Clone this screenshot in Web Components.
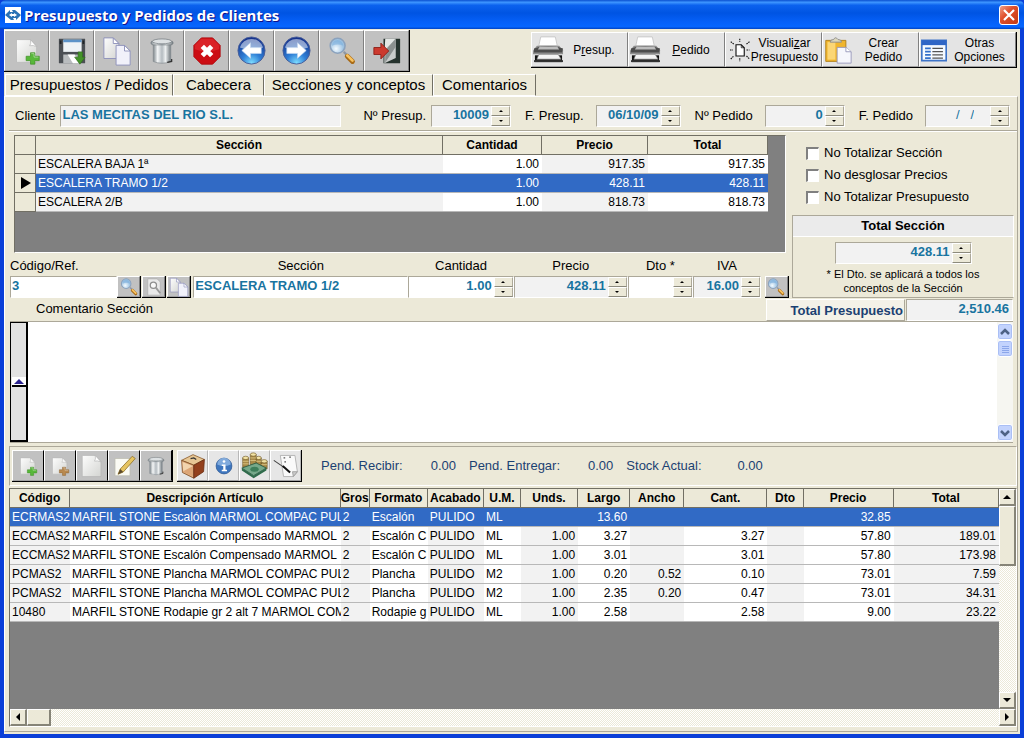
<!DOCTYPE html>
<html lang="es">
<head>
<meta charset="utf-8">
<title>Presupuesto y Pedidos de Clientes</title>
<style>
html, body { height: 100%; }
body {
  margin: 0;
  font: 13px/16px "Liberation Sans", Arial, sans-serif;
  color: #000;
  background: #ece9d8;
}
</style>
</head>
<body>
<order-app></order-app>

<script>
const doc = `<path d="M4 3h16l7 7v19H4z" fill="url(#pg)" stroke="#b4b4b4" stroke-width=".8"/><path d="M20 3q1 5-1 7 4-1 8 1z" fill="#fff" stroke="#b4b4b4" stroke-width=".8"/>`;
const pageGrad = `<linearGradient id="pg" x1="0" y1="0" x2="1" y2="1"><stop offset="0" stop-color="#fdfdfd"/><stop offset="1" stop-color="#d4d5d2"/></linearGradient>`;
const plus = (fill, edge) => `<path d="M20 18h5v4h5v5h-5v4h-5v-4h-5v-5h5z" fill="${fill}" stroke="${edge}" stroke-width=".8"/><path d="M21 19h3v4h5" fill="none" stroke="#fff" stroke-opacity=".45"/>`;
const orb = `<defs><radialGradient id="ob" cx=".5" cy=".95" r=".9"><stop offset="0" stop-color="#7ddcff"/><stop offset=".4" stop-color="#2f7fd6"/><stop offset="1" stop-color="#16338c"/></radialGradient></defs><circle cx="16" cy="16" r="14" fill="url(#ob)" stroke="#4a5f9a"/><path d="M4 13a12.500 12.500 0 0 1 24 0q-12 5-24 0z" fill="#fff" fill-opacity=".5"/>`;
const can = `<defs><linearGradient id="cn"><stop offset="0" stop-color="#7d868b"/><stop offset=".25" stop-color="#f4f6f7"/><stop offset=".5" stop-color="#b4bbc0"/><stop offset=".7" stop-color="#eceff0"/><stop offset="1" stop-color="#6f777c"/></linearGradient></defs><path d="M6 6v22q10 4 20 0V6z" fill="url(#cn)" stroke="#858d92" stroke-width=".8"/><path d="M22 29l5-1v-3" fill="none" stroke="#333" stroke-width="1.500"/><path d="M4 5q-2 2 1 4h22q3-2 1-4z" fill="url(#cn)" stroke="#727a7f" stroke-width=".8"/><ellipse cx="16" cy="5" rx="11" ry="2.800" fill="#dde1e3" stroke="#727a7f" stroke-width=".8"/>`;
const lens = `<defs><radialGradient id="ln" cx=".4" cy=".7"><stop offset="0" stop-color="#f4fbff"/><stop offset="1" stop-color="#9cc2e2"/></radialGradient></defs><path d="M18 17l4 4" stroke="#8d97a3" stroke-width="2.500"/><path d="M22 22l6 6" stroke="#a86a16" stroke-width="5.500" stroke-linecap="round"/><path d="M22 21l6 6" stroke="#f8c35f" stroke-width="3" stroke-linecap="round"/><circle cx="11" cy="10" r="8.500" fill="url(#ln)" stroke="#8ba2bd" stroke-width="1.800"/><path d="M4.500 10a6.500 6.500 0 0 1 13 0q-6-3-13 0z" fill="#7fb0dd" fill-opacity=".6"/>`;

const icons = {
  add: `<defs>${pageGrad}</defs>${doc}${plus("#58b83a", "#3f8f27")}`,
  addOrange: `<defs>${pageGrad}</defs>${doc}${plus("#b9894e", "#8d6534")}`,
  page: `<defs>${pageGrad}</defs>${doc}`,
  save: `<path d="M1 2h30v28H1z" fill="#4b4f54"/><path d="M6 3h21v14H6z" fill="#eef3f6"/><path d="M6 3h21v3H6z" fill="#5c93c8"/><path d="M2 4h2v4H2zM28 4h2v4h-2z" fill="#202427"/><path d="M6 20h19v10H6z" fill="#b9bcbe"/><path d="M11 20h8l5 10h-7z" fill="#fff"/><path d="M23 17h5v6h3l-6 8-6-8h4z" fill="#439328" stroke="#2f6b1c" stroke-width=".7"/>`,
  copy: `<defs>${pageGrad}</defs><path d="M2 2h10l6 6v16H2z" fill="url(#pg)" stroke="#8e91bb"/><path d="M12 2v6h6z" fill="#fff" stroke="#8e91bb"/><path d="M15 10h9l6 6v15H15z" fill="#f1f1fa" stroke="#8e91bb"/><path d="M24 10v6h6z" fill="#fff" stroke="#8e91bb"/>`,
  trash: can,
  cancel: `<path d="M10 2h12l8 8v12l-8 8H10l-8-8V10z" fill="#cc0d13" stroke="#b00c10"/><path d="M10 3h12l7 7v4q-13 5-26 0v-4z" fill="#e8383b" fill-opacity=".5"/><path d="M11 11l10 10M21 11L11 21" stroke="#fff" stroke-width="5"/>`,
  back: `${orb}<path d="M6 16l9-8v5h11v6H15v5z" fill="#fff" stroke="#c2d5ee" stroke-width=".7"/>`,
  next: `${orb}<path d="M26 16l-9-8v5H6v6h11v5z" fill="#fff" stroke="#c2d5ee" stroke-width=".7"/>`,
  search: lens,
  searchDoc: `<path d="M6 3h15l5 5v21H6z" fill="#e9e9e9" stroke="#aaa"/><circle cx="15" cy="13" r="5" fill="#f8f8f8" stroke="#8e8e8e" stroke-width="2"/><path d="M19 17l7 9" stroke="#999" stroke-width="3"/>`,
  exit: `<path d="M12 2h19v28H12z" fill="#26332e"/><path d="M14 2h12L16 13v10l-3-5z" fill="#e3e6e4"/><path d="M26 2v22L13 30V15z" fill="#c9cccb"/><path d="M26 2v9L14 29V15z" fill="#8b908f"/><path d="M1 12h8V7l9 9-9 9v-5H1z" fill="#cc3a2e" stroke="#8d1d15"/>`,
  printer: `<path d="M8 3h15l2 9H6z" fill="#fff" stroke="#bbb" stroke-width=".7"/><path d="M4 12h23l4 5v4H0v-4z" fill="#8e8e8e"/><path d="M1 15q15-5 30 0l-1 4H1z" fill="#4c4c4c"/><path d="M7 13h18l2 3H5z" fill="#bdbdbd"/><path d="M2 22h28v7H2z" fill="#111"/><path d="M6 21h20l3 5H4z" fill="#f4f4f4" stroke="#777" stroke-width=".7"/><path d="M1 27h30v2H1z" fill="#333"/>`,
  preview: `<path d="M12 9h7l4 4v11H12z" fill="#fff" stroke="#111" stroke-width="1.500"/><path d="M19 9v4h4" fill="none" stroke="#111"/><path d="M4 16h4M26 16h4M17 1v4M17 27v4M5 5l4 3M26 8l4-3M5 28l4-4M26 24l4 4" stroke="#111" stroke-width="1.500" stroke-dasharray="2 1"/>`,
  paste: `<path d="M2 5h23v24H2z" fill="#f0b52d" stroke="#ad7b12"/><path d="M4 7h9v20H4z" fill="#fbd675"/><path d="M7 7q0-3 4-3 2-4 5 0 4 0 4 3z" fill="#ddd8bc" stroke="#888"/><path d="M15 13h10l6 5v13H15z" fill="#f6f7fc" stroke="#9395b8"/><path d="M25 13v5h6" fill="#fff" stroke="#9395b8"/>`,
  list: `<path d="M1 4h30v25H1z" fill="#f5faff" stroke="#3e74c8" stroke-width="2"/><path d="M1 4h30v6H1z" fill="#2f66c6"/><path d="M5 14h7M5 18h7M5 22h7M5 26h7" stroke="#326fca" stroke-width="2"/><path d="M14 14h13M14 18h13M14 22h13M14 26h13" stroke="#555" stroke-width="1.500"/>`,
  edit: `<path d="M4 6h20v23H4z" fill="#fbfbf4" stroke="#bcbcb0"/><path d="M8 27l3-7L27 3l4 3-16 18z" fill="#e6c460" stroke="#8a6b21"/><path d="M8 27l3-7 4 4z" fill="#5b4a2c"/>`,
  box: `<path d="M2 9l14-7 14 6-13 7z" fill="#e7c795" stroke="#8a5a2a"/><path d="M2 9l15 6v16L3 24z" fill="#d9a574" stroke="#80502a"/><path d="M17 15l13-7-1 15-12 8z" fill="#93401d" stroke="#6a2d14"/><path d="M3 11l13 5v13L4 23z" fill="#f2d4ae"/><path d="M3 23l13-7v13z" fill="#dca576"/><path d="M13 7l4-1 3 2" fill="none" stroke="#333" stroke-width="1.500"/>`,
  info: `<circle cx="16" cy="16" r="10.500" fill="#3e76be" stroke="#2a5593"/><path d="M7 14a9 9 0 0 1 18 0q-9 4-18 0z" fill="#9bc0ea" fill-opacity=".7"/><circle cx="16" cy="10" r="1.800" fill="#fff"/><path d="M13 14h5v7h2v2h-7v-2h2v-5h-2z" fill="#fff"/>`,
  money: `<g stroke="#6a5220" stroke-width=".7"><path d="M11 3v13h7V3zM2 7v11h7V7zM18 7v9h6V7zM24 11v9h7v-9z" fill="#a98a48"/><ellipse cx="5.500" cy="7" rx="3.500" ry="2" fill="#f2e2a4"/><ellipse cx="14.500" cy="3" rx="3.500" ry="2" fill="#f2e2a4"/><ellipse cx="21" cy="7" rx="3" ry="2" fill="#f2e2a4"/><ellipse cx="27.500" cy="11" rx="3.500" ry="2" fill="#f2e2a4"/></g><path d="M2 11h7M2 14h7M11 7h7M11 10h7M18 11h6M24 15h7" stroke="#dcc685"/><path d="M1 19l17-6 12 6-15 9z" fill="#76a98a" stroke="#275740"/><path d="M1 19l14 9v3L1 22zM15 28l15-9v3l-15 9z" fill="#2f6b4b"/><ellipse cx="16" cy="20.500" rx="5" ry="3" fill="#3d7e5a"/>`,
  note: `<path d="M9 3h18l3 20-5 6H13z" fill="#fafafa" stroke="#aaa"/><path d="M25 29l-1-6h6z" fill="#ccc" stroke="#999"/><path d="M1 9l13 9" stroke="#444" stroke-width="1.300"/><path d="M12 16l9 8" stroke="#111" stroke-width="2.500"/><path d="M13 6h2M14 11h2M20 5h2" stroke="#555" stroke-width="1.500"/>`,
};

const svg = (name, size) =>
  `<svg width="${size}" height="${size}" viewBox="0 0 32 32" aria-hidden="true">${icons[name]}</svg>`;

function define(name, html, setup) {
  const template = document.createElement("template");
  template.innerHTML = html;
  customElements.define(
    name,
    class extends HTMLElement {
      constructor() {
        super();
        this.attachShadow({ mode: "open" });
        this.shadowRoot.appendChild(template.content.cloneNode(true));
      }
      connectedCallback() {
        if (setup && !this.ready) setup(this, this.shadowRoot);
        this.ready = true;
      }
    }
  );
}

define("title-bar", `
<style>
:host {
  display: flex; align-items: center; gap: 3px; height: 29px; padding: 0 5px;
  box-sizing: border-box; border-radius: 6px 6px 0 0; color: #fff;
  background: linear-gradient(#0a50d0, #3d95ff 8%, #0b62ee 18%, #0054e3 45%, #0560f8 75%, #0666ff 92%, #0043c4);
}
h1 { flex: 1; margin: 0; font: bold 15px/20px "Trebuchet MS", "Open Sans", sans-serif; text-shadow: 1px 1px #0f1089; }
button { width: 20px; height: 20px; padding: 0; border: 1px solid #fff; border-radius: 3px; background: linear-gradient(135deg, #f0a088, #e0502c 40%, #c33a12); }
svg { display: block; }
</style>
<svg width="16" height="16" viewBox="0 0 16 16" aria-hidden="true"><path d="M0 0h16v16H0z" fill="#fff"/><path d="M0 8l5-5v2h3L7 3h3l6 5-5 5v-2H8l1 2H6z" fill="#2a72b5"/><path d="M4 8l3-2v1h2V6l3 2-3 2V9H7v1z" fill="#fff"/></svg>
<h1><slot></slot></h1>
<button type="button" aria-label="Cerrar"><svg width="18" height="18" viewBox="0 0 18 18"><path d="M4 4l10 10M14 4L4 14" stroke="#fff" stroke-width="2.200"/></svg></button>
`);

define("button-group", `
<style>
:host { display: flex; border: solid #000; border-width: 0 1px 1px 0; }
</style>
<slot></slot>
`);

define("tool-button", `
<style>
:host { display: block; width: var(--tool-width, 45px); height: var(--tool-height, 41px); }
button {
  display: flex; align-items: center; justify-content: center; width: 100%; height: 100%;
  padding: 0 1px; box-sizing: border-box; font: 12px/14px "Liberation Sans", Arial, sans-serif; color: #000;
  border: solid; border-width: 1px; border-color: #fff var(--tool-edge, #808080) #a0a0a0 #fff;
  background: var(--tool-face, #c1c1c1);
}
svg { flex: none; }
:host([wide]) svg { margin: 0 -2px 0 0; }
:host([wide]) span { flex: 1; text-align: center; }
:host([wide]) { --tool-face: #e4e4e4; }
:host(:not([wide])) span { display: none; }
</style>
<button type="button"><span><slot></slot></span></button>
`, (el, root) => {
  const button = root.querySelector("button");
  button.insertAdjacentHTML("afterbegin", svg(el.getAttribute("icon"), el.getAttribute("size") || 28));
  if (el.hasAttribute("name")) button.setAttribute("aria-label", el.getAttribute("name"));
});

define("tab-strip", `
<style>
:host { display: flex; height: 22px; padding-left: 1px; }
button {
  height: 22px; padding: 0; font: 15px/20px "Liberation Sans", Arial, sans-serif; color: #000; background: #ece9d8;
  border: solid; border-width: 1px; border-color: #fff #716f64 #fff #fff;
}
button[aria-selected=true] { border-bottom-color: #ece9d8; }
</style>
`, (el, root) => {
  const tabs = [["Presupuestos / Pedidos", 168], ["Cabecera", 91], ["Secciones y conceptos", 169], ["Comentarios", 103]];
  root.append(...tabs.map(([text, width], i) => {
    const tab = document.createElement("button");
    tab.setAttribute("role", "tab");
    tab.setAttribute("aria-selected", i === 2);
    tab.style.width = width + "px";
    tab.textContent = text;
    return tab;
  }));
  el.setAttribute("role", "tablist");
});

// label + text box, with up/down buttons when "spin" is set
define("form-field", `
<style>
:host { display: flex; align-items: center; gap: var(--label-gap, 12px); }
:host([stacked]) { flex-direction: column; align-items: stretch; gap: 3px; min-width: 0; }
:host([stacked]) label { line-height: 15px; text-align: center; }
:host([stacked][start]) label { text-align: left; }
label { white-space: nowrap; }
.box {
  display: flex; flex: 1; height: 22px; box-sizing: border-box; min-width: 0;
  border: solid; border-width: 1px; border-color: #aca899 #fff #fff #aca899; background: #f2f2f2;
}
:host([stacked]) .box { flex: none; }
:host([editable]) .box { background: #fff; }
:host(:not([stacked])[spin]) .box { flex: 0 0 var(--box-width, 80px); }
input {
  flex: 1; width: 0; min-width: 0; padding: 0 1px 2px; border: 0; outline: 0; background: none;
  font: bold 13px/16px "Liberation Sans", Arial, sans-serif; color: #1874a0;
}
:host([spin]) input { text-align: right; padding-right: 2px; }
:host([mask]) input { padding-right: 16px; font-weight: normal; }
.spin { display: none; flex-direction: column; width: 19px; }
:host([spin]) .spin { display: flex; }
.spin button {
  flex: 1; padding: 0; display: grid; place-items: center; background: #ece9d8;
  border: solid; border-width: 1px; border-color: #fff #aca899 #8c8a7c #fff;
}
svg { display: block; }
</style>
<label for="f"></label>
<div class="box">
  <input id="f" type="text">
  <div class="spin">
    <button type="button" aria-label="Subir"><svg width="4" height="2"><path d="M0 2l2-2 2 2z"/></svg></button>
    <button type="button" aria-label="Bajar"><svg width="4" height="2"><path d="M0 0h4L2 2z"/></svg></button>
  </div>
</div>
`, (el, root) => {
  root.querySelector("label").textContent = el.getAttribute("label") || "";
  if (!el.hasAttribute("label")) {
    root.querySelector("label").remove();
    root.querySelector("input").setAttribute("aria-label", el.getAttribute("name"));
  }
  root.querySelector("input").value = el.getAttribute("value") || "";
});

define("check-option", `
<style>
:host { display: block; }
label { display: flex; align-items: center; gap: 5px; height: 22px; }
input {
  appearance: none; width: 13px; height: 13px; margin: 0; background: #fff;
  border: solid; border-width: 2px 1px 1px 2px; border-color: #808080 #fff #fff #808080;
}
</style>
<label><input type="checkbox"><span><slot></slot></span></label>
`);

define("scroll-bar", `
<style>
:host {
  display: flex; flex-direction: column;
  background: repeating-conic-gradient(#fff 0 25%, #ece9d8 0 50%) 0 0 / 2px 2px;
}
:host([horizontal]) { flex-direction: row; }
button, i {
  flex: 0 0 17px; width: 17px; height: 17px; padding: 0; box-sizing: border-box; display: grid; place-items: center; background: #ece9d8;
  border: solid; border-width: 1px 2px 2px 1px; border-color: #fff #868477 #868477 #fff;
}
i { flex-basis: var(--thumb, 24px); }
:host(:not([horizontal])) i { height: auto; }
b { flex: 1; }
svg { display: block; }
:host([blue]) { background: #f6f6f1; padding: 1px 0; }
:host([blue]) button, :host([blue]) i { border: 1px solid #fff; border-radius: 3px; background: #c3d3fd; box-shadow: inset 0 0 0 1px #aabff5; width: 16px; }
:host([blue]) i { background: repeating-linear-gradient(#c3d3fd 0 1px, #8ba6ea 1px 2px) 50% 50% / 7px 8px no-repeat #c3d3fd; }
</style>
<button type="button" aria-label="Atrás"></button><i></i><b></b><button type="button" aria-label="Adelante"></button>
`, (el, root) => {
  const [first, last] = root.querySelectorAll("button");
  const paths = el.hasAttribute("blue")
    ? ["M1 7l4-4 4 4", "M1 3l4 4 4-4"]
    : el.hasAttribute("horizontal") ? ["M7 1L3 5l4 4z", "M3 1l4 4-4 4z"] : ["M1 7l4-4 4 4z", "M1 3h8L5 7z"];
  const paint = el.hasAttribute("blue") ? `fill="none" stroke="#4d6185" stroke-width="2.500"` : "";
  first.innerHTML = `<svg width="10" height="10"><path d="${paths[0]}" ${paint}/></svg>`;
  last.innerHTML = `<svg width="10" height="10"><path d="${paths[1]}" ${paint}/></svg>`;
});

const sources = {
  secciones: {
    marker: true,
    selected: 1,
    cols: [["Sección", 407], ["Cantidad", 99, 1], ["Precio", 106, 1], ["Total", 120, 1]],
    rows: [
      ["ESCALERA BAJA 1ª", "1.00", "917.35", "917.35"],
      ["ESCALERA TRAMO 1/2", "1.00", "428.11", "428.11"],
      ["ESCALERA 2/B", "1.00", "818.73", "818.73"],
    ],
  },
  articulos: {
    selected: 0,
    cols: [
      ["Código", 60], ["Descripción Artículo", 270], ["Gros", 29], ["Formato", 58], ["Acabado", 56],
      ["U.M.", 37], ["Unds.", 57, 1], ["Largo", 52, 1], ["Ancho", 54, 1], ["Cant.", 83, 1],
      ["Dto", 36, 1], ["Precio", 90, 1], ["Total", 105, 1],
    ],
    rows: [
      ["ECRMAS2", "MARFIL STONE Escalón MARMOL COMPAC PUL", "2", "Escalón", "PULIDO", "ML", "", "13.60", "", "", "", "32.85", ""],
      ["ECCMAS2", "MARFIL STONE Escalón Compensado MARMOL", "2", "Escalón C", "PULIDO", "ML", "1.00", "3.27", "", "3.27", "", "57.80", "189.01"],
      ["ECCMAS2", "MARFIL STONE Escalón Compensado MARMOL", "2", "Escalón C", "PULIDO", "ML", "1.00", "3.01", "", "3.01", "", "57.80", "173.98"],
      ["PCMAS2", "MARFIL STONE Plancha MARMOL COMPAC PUL", "2", "Plancha", "PULIDO", "M2", "1.00", "0.20", "0.52", "0.10", "", "73.01", "7.59"],
      ["PCMAS2", "MARFIL STONE Plancha MARMOL COMPAC PUL", "2", "Plancha", "PULIDO", "M2", "1.00", "2.35", "0.20", "0.47", "", "73.01", "34.31"],
      ["10480", "MARFIL STONE Rodapie gr 2 alt 7 MARMOL COM", "2", "Rodapie g", "PULIDO", "ML", "1.00", "2.58", "", "2.58", "", "9.00", "23.22"],
    ],
  },
};

define("data-grid", `
<style>
:host {
  display: grid; grid-template: 1fr auto / 1fr auto; box-sizing: border-box; background: #808080;
  border: solid; border-width: 1px; border-color: #716f64 #fff #fff #716f64;
  font-size: 12px; line-height: 18px;
}
.view { padding-right: var(--gutter, 0px); min-width: 0; overflow: hidden; }
table { width: 100%; table-layout: fixed; border-collapse: separate; border-spacing: 0; }
th, td { padding: 0 0 0 2px; overflow: hidden; white-space: nowrap; text-align: left; font-weight: normal; }
thead th {
  padding: 0; background: #ece9d8; text-align: center; font-weight: bold;
  border: solid #716f64; border-width: 0 1px 1px 0;
}
tbody th { background: #ece9d8; border: solid #716f64; border-width: 0 1px 1px 0; }
td { background: #fff; border-bottom: 1px solid #b8b8b8; }
td.alt { background: #f2f2f2; }
td.num { text-align: right; padding-right: 3px; }
tr.sel td { background: #316ac5; color: #fff; }
tbody svg { display: block; margin: auto; }
scroll-bar[horizontal] { grid-column: 1 / 3; }
</style>
<div class="view"><table><colgroup></colgroup><thead><tr></tr></thead><tbody></tbody></table></div>
`, (el, root) => {
  const { cols, rows, marker, selected } = sources[el.getAttribute("source")];
  root.querySelector("colgroup").innerHTML =
    (marker ? `<col style="width:21px">` : "") + cols.map(([, w]) => `<col style="width:${w}px">`).join("");
  root.querySelector("thead tr").innerHTML =
    (marker ? "<th></th>" : "") + cols.map(([name]) => `<th scope="col">${name}</th>`).join("");
  const arrow = `<svg width="12" height="12"><path d="M1 0l10 6-10 6z"/></svg>`;
  root.querySelector("tbody").innerHTML = rows.map((row, r) => {
    const cells = row.map((text, c) => {
      const alt = c % 2 === 0 ? "alt" : "";
      return `<td class="${alt} ${cols[c][2] ? "num" : ""}">${text}</td>`;
    });
    const head = marker ? `<th>${r === selected ? arrow : ""}</th>` : "";
    return `<tr class="${r === selected ? "sel" : ""}">${head}${cells.join("")}</tr>`;
  }).join("");
  if (el.hasAttribute("scroll")) {
    root.querySelector(".view").insertAdjacentHTML("afterend",
      `<scroll-bar style="--thumb:60px"></scroll-bar><scroll-bar horizontal></scroll-bar>`);
  }
});

define("total-box", `
<style>
:host { display: block; border: solid; border-width: 1px; border-color: #aca899 #fff #aca899 #aca899; }
h2 { margin: 0; font: bold 13px/20px "Liberation Sans", Arial, sans-serif; text-align: center; background: #ebebeb; border-bottom: 1px solid #fff; }
form-field { width: 137px; margin: 5px auto 3px; }
p { margin: 0 0 2px; font-size: 11px; line-height: 14px; text-align: center; }
</style>
<h2>Total Sección</h2>
<form-field spin stacked name="Total Sección" value="428.11"></form-field>
<p>* El Dto. se aplicará a todos los<br>conceptos de la Sección</p>
`);

define("section-editor", `
<style>
:host { display: grid; grid-template-columns: 1fr 222px; gap: 3px; padding: 3px 3px 0 1px; border-top: 1px solid #fff; }
data-grid { --gutter: 18px; height: 118px; margin: 0 3px 5px 4px; }
.fields { display: grid; grid-template-columns: 107fr 76px 215fr 105fr 114fr 65fr 68fr 28px; align-items: end; }
.buttons { display: flex; gap: 1px; --tool-width: 24px; --tool-height: 22px; }
.buttons tool-button { border: solid #000; border-width: 0 1px 1px 0; box-sizing: border-box; }
.last { justify-content: flex-end; }
.side { display: flex; flex-direction: column; justify-content: space-between; }
.checks { padding: 7px 0 0 14px; }
</style>
<div>
  <data-grid source="secciones"></data-grid>
  <div class="fields">
    <form-field stacked start editable label="Código/Ref." value="3"></form-field>
    <div class="buttons">
      <tool-button icon="search" size="18" name="Buscar"></tool-button>
      <tool-button icon="searchDoc" size="20" name="Ver"></tool-button>
      <tool-button icon="copy" size="20" name="Copiar"></tool-button>
    </div>
    <form-field stacked editable label="Sección" value="ESCALERA TRAMO 1/2"></form-field>
    <form-field stacked spin editable label="Cantidad" value="1.00"></form-field>
    <form-field stacked spin label="Precio" value="428.11"></form-field>
    <form-field stacked spin editable label="Dto *"></form-field>
    <form-field stacked spin label="IVA" value="16.00"></form-field>
    <div class="buttons last"><tool-button icon="search" size="18" name="Buscar IVA"></tool-button></div>
  </div>
</div>
<div class="side">
  <div class="checks">
    <check-option>No Totalizar Sección</check-option>
    <check-option>No desglosar Precios</check-option>
    <check-option>No Totalizar Presupuesto</check-option>
  </div>
  <total-box></total-box>
</div>
`);

define("comment-box", `
<style>
:host { display: block; padding: 1px 4px 0 1px; }
.head { display: flex; height: 22px; }
.head label { flex: 1; padding: 2px 0 0 26px; }
.total, output { box-sizing: border-box; font-weight: bold; text-align: right; border: 1px solid; }
.total { width: 139px; padding: 2px 1px 0 0; line-height: 18px; color: #1b4172; background: #f4f2e8; border-color: #fff #aca899 #aca899 #fff; }
output { width: 107px; padding-right: 3px; margin-left: 1px; line-height: 18px; color: #1874a0; background: #f2f2f2; border-color: #aca899 #fff #fff #aca899; }
.body { display: flex; height: 122px; box-sizing: border-box; background: #fff; border: solid #aca899; border-width: 1px 0; }
.fold { width: 18px; padding: 0; display: grid; place-items: center; background: #e2e2e2; border: solid #000; border-width: 1px 2px 2px 1px; }
textarea { flex: 1; border: 0; padding: 2px; resize: none; outline: 0; overflow: hidden; font: 13px/16px "Liberation Sans", Arial, sans-serif; }
scroll-bar { --thumb: 17px; }
</style>
<div class="head">
  <label for="c">Comentario Sección</label>
  <span class="total">Total Presupuesto</span><output>2,510.46</output>
</div>
<div class="body">
  <button class="fold" type="button" aria-label="Plegar"><svg width="14" height="10"><path d="M0 0h14v8H0z" fill="#fff"/><path d="M2 7l5-5 5 5z" fill="#2a2390"/><path d="M0 9h14" stroke="#000" stroke-width="2"/></svg></button>
  <textarea id="c"></textarea>
  <scroll-bar blue></scroll-bar>
</div>
`);

define("stock-bar", `
<style>
:host {
  display: flex; align-items: center; gap: 4px; height: 40px; box-sizing: border-box; margin: 3px 0 2px; padding: 0 2px;
  border: solid; border-width: 1px; border-color: #aca899 #fff #fff #aca899; color: #1b4172;
}
button-group { --tool-width: 31px; --tool-height: 31px; }
.one { --tool-width: 32px; --tool-edge: #000; }
.two { --tool-face: #e6e6e6; --tool-edge: #b8b8b8; }
dl { display: flex; gap: 13px; margin: 0 0 0 15px; }
div { display: flex; gap: 28px; }
dd { margin: 0; }
div:last-child { gap: 36px; }
</style>
<button-group class="one">
  <tool-button icon="add" size="20" name="Añadir"></tool-button>
  <tool-button icon="addOrange" size="20" name="Insertar"></tool-button>
  <tool-button icon="page" size="26" name="Nuevo"></tool-button>
  <tool-button icon="edit" size="24" name="Editar"></tool-button>
  <tool-button icon="trash" size="20" name="Borrar"></tool-button>
</button-group>
<button-group class="two">
  <tool-button icon="box" size="26" name="Artículo"></tool-button>
  <tool-button icon="info" size="24" name="Información"></tool-button>
  <tool-button icon="money" size="27" name="Precios"></tool-button>
  <tool-button icon="note" size="26" name="Notas"></tool-button>
</button-group>
<dl>
  <div><dt>Pend. Recibir:</dt><dd>0.00</dd></div>
  <div><dt>Pend. Entregar:</dt><dd>0.00</dd></div>
  <div><dt>Stock Actual:</dt><dd>0.00</dd></div>
</dl>
`);

define("order-app", `
<style>
:host { display: flex; flex-direction: column; min-height: 100%; box-sizing: border-box; background: #0a3fd8; }
main { flex: 1; display: flex; flex-direction: column; margin: 0 4px 4px; padding-bottom: 2px; background: #ece9d8; }
.bars { display: flex; justify-content: space-between; align-items: flex-start; padding: 1px 3px 2px 0; }
.print { --tool-width: 97px; --tool-height: 35px; margin-top: 2px; }
.panel { flex: 1; display: flex; flex-direction: column; margin-right: 2px; padding: 0 0 4px 4px; border: solid; border-width: 1px; border-color: #fff #aca899 #aca899 #fff; }
.client { display: flex; gap: 14px; padding: 8px 7px 3px 6px; border-bottom: 1px solid #aca899; }
.client form-field:first-child { flex: 1; --label-gap: 5px; margin-right: 8px; }
.items { flex: 1; }
</style>
<title-bar>Presupuesto y Pedidos de Clientes</title-bar>
<main>
  <div class="bars">
    <button-group>
      <tool-button icon="add" name="Nuevo"></tool-button>
      <tool-button icon="save" name="Guardar"></tool-button>
      <tool-button icon="copy" size="30" name="Copiar"></tool-button>
      <tool-button icon="trash" name="Borrar"></tool-button>
      <tool-button icon="cancel" size="30" name="Cancelar"></tool-button>
      <tool-button icon="back" size="31" name="Anterior"></tool-button>
      <tool-button icon="next" size="31" name="Siguiente"></tool-button>
      <tool-button icon="search" name="Buscar"></tool-button>
      <tool-button icon="exit" name="Salir"></tool-button>
    </button-group>
    <button-group class="print">
      <tool-button wide icon="printer" size="31">P<u>r</u>esup.</tool-button>
      <tool-button wide icon="printer" size="31"><u>P</u>edido</tool-button>
      <tool-button wide icon="preview" size="24">Visuali<u>z</u>ar Presupuesto</tool-button>
      <tool-button wide icon="paste" size="28">Crear<br>Pedido</tool-button>
      <tool-button wide icon="list" size="26">Otras<br>Opciones</tool-button>
    </button-group>
  </div>
  <tab-strip></tab-strip>
  <div class="panel">
    <div class="client">
      <form-field label="Cliente" value="LAS MECITAS DEL RIO S.L."></form-field>
      <form-field spin label="Nº Presup." value="10009" style="--label-gap:5px"></form-field>
      <form-field spin label="F. Presup." value="06/10/09" style="--box-width:85px"></form-field>
      <form-field spin label="Nº Pedido" value="0"></form-field>
      <form-field spin mask label="F. Pedido" value="/   /" style="--box-width:85px"></form-field>
    </div>
    <section-editor></section-editor>
    <comment-box></comment-box>
    <stock-bar></stock-bar>
    <data-grid class="items" source="articulos" scroll></data-grid>
  </div>
</main>
`);
</script>
</body>
</html>
